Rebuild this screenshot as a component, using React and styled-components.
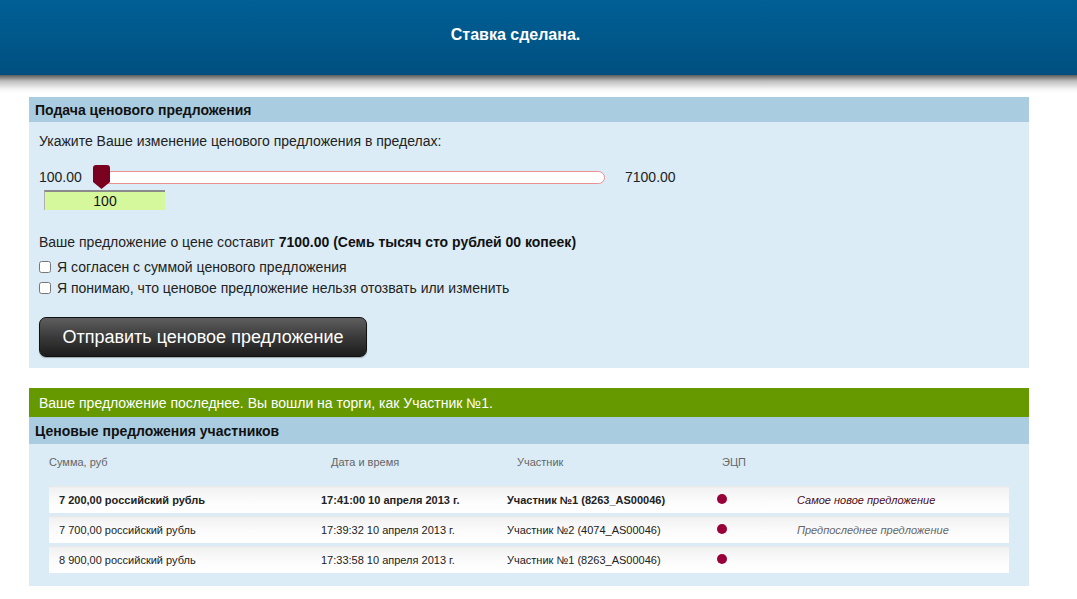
import React from 'react';
import styled, { createGlobalStyle } from 'styled-components';

const Global = createGlobalStyle`
  body {
    margin: 0;
    background: #fff;
    font-family: "Liberation Sans", Arial, sans-serif;
    color: #111;
  }
`;

const TopBar = styled.div`
  height: 75px;
  background: linear-gradient(#005f96, #00507f);
  display: flex;
  align-items: center;
  justify-content: center;
  color: #fff;
  font-weight: bold;
  font-size: 16px;
  padding: 0 46px 6px 0;
  box-sizing: border-box;
`;

const Shade = styled.div`
  height: 22px;
  background: linear-gradient(#5c5c5c 0px, #bdbdbd 6px, #f4f4f4 14px, #fff 18px);
`;

const Panel = styled.section`
  width: 1000px;
  margin-left: 29px;
  background: #dbecf6;
  margin-bottom: ${p => p.$gap || 0}px;
`;

const PanelTitle = styled.div`
  background: #a9cce0;
  padding-left: 6px;
  display: flex;
  align-items: center;
  font-weight: bold;
  font-size: 14px;
  color: #111;
  height: ${p => p.$h || 25}px;
`;

const Body = styled.div`
  padding: 11px 10px 11px 10px;
  font-size: 14px;
  color: #222;
`;

const Hint = styled.div`
  line-height: 16px;
  margin-bottom: 20px;
`;

const SliderRow = styled.div`
  display: flex;
  align-items: center;
  height: 16px;
`;

const Edge = styled.span`
  width: ${p => p.$w}px;
`;

const Track = styled.div`
  position: relative;
  width: 507px;
  height: 11px;
  background: #fff;
  border: 1px solid #ea9090;
  border-radius: 7px;
  margin-right: 20px;
`;

const Handle = styled.svg`
  position: absolute;
  left: -4px;
  top: -7px;
`;

const Amount = styled.div`
  margin: 5px 0 0 5px;
  width: 120px;
  height: 18px;
  background: #d6f89c;
  border-top: 2px solid #8b8b8b;
  border-left: 1px solid #b0b0b0;
  font-size: 14px;
  text-align: center;
  line-height: 18px;
  color: #111;
`;

const Total = styled.div`
  margin-top: 24px;
  line-height: 16px;
  b { color: #111; }
`;

const Check = styled.label`
  display: flex;
  align-items: center;
  gap: 6px;
  height: 21px;
  margin-top: ${p => p.$top || 0}px;
  input {
    margin: 0;
    width: 12px;
    height: 12px;
  }
`;

const SendButton = styled.button`
  margin-top: 19px;
  width: 328px;
  height: 40px;
  border: 1px solid #111;
  border-radius: 7px;
  background: linear-gradient(#5e5e5e, #3a3a3a 50%, #1c1c1c);
  color: #fff;
  font-family: "Liberation Sans", Arial, sans-serif;
  font-size: 18px;
  box-shadow: 0 1px 1px rgba(0,0,0,0.3);
`;

const Notice = styled.div`
  height: 29px;
  background: #669900;
  color: #fff;
  font-size: 14px;
  padding-left: 10px;
  display: flex;
  align-items: center;
`;

const TableBox = styled.div`
  padding: 0 20px 13px 20px;
`;

const HeadRow = styled.div`
  display: grid;
  grid-template-columns: 282px 186px 205px 1fr;
  height: 35px;
  align-items: center;
  font-size: 11px;
  color: #666;
`;

const Row = styled.div`
  display: grid;
  grid-template-columns: 262px 186px 210px 80px 1fr;
  align-items: center;
  height: 27px;
  padding-left: 10px;
  margin-top: 3px;
  background: linear-gradient(#e6e6e6, #f2f2f2 2px, #fcfcfc 60%, #fff);
  font-size: 11px;
  color: #222;
  font-weight: ${p => (p.$bold ? 'bold' : 'normal')};
  &:first-of-type { margin-top: 0; }
`;

const Dot = styled.span`
  width: 10px;
  height: 10px;
  border-radius: 50%;
  background: #99003a;
  margin-top: -1px;
`;

const Note = styled.span`
  font-style: italic;
  font-weight: normal;
  color: ${p => (p.$latest ? '#4a0a1a' : '#666')};
`;

const Rows = styled.div`
  margin-top: 7px;
`;

const bids = [
  { sum: '7 200,00 российский рубль', time: '17:41:00 10 апреля 2013 г.', who: 'Участник №1 (8263_AS00046)', note: 'Самое новое предложение', bold: true },
  { sum: '7 700,00 российский рубль', time: '17:39:32 10 апреля 2013 г.', who: 'Участник №2 (4074_AS00046)', note: 'Предпоследнее предложение' },
  { sum: '8 900,00 российский рубль', time: '17:33:58 10 апреля 2013 г.', who: 'Участник №1 (8263_AS00046)', note: '' },
];

export default function App() {
  return (
    <>
      <Global />
      <TopBar>Ставка сделана.</TopBar>
      <Shade />
      <Panel $gap={20}>
        <PanelTitle>Подача ценового предложения</PanelTitle>
        <Body>
          <Hint>Укажите Ваше изменение ценового предложения в пределах:</Hint>
          <SliderRow>
            <Edge $w={57}>100.00</Edge>
            <Track>
              <Handle width="17" height="24" viewBox="0 0 17 24">
                <path d="M3 0 H14 Q17 0 17 3 V17 L8.5 24 L0 17 V3 Q0 0 3 0 Z" fill="#7a0020" />
              </Handle>
            </Track>
            <span>7100.00</span>
          </SliderRow>
          <Amount>100</Amount>
          <Total>
            Ваше предложение о цене составит <b>7100.00 (Семь тысяч сто рублей 00 копеек)</b>
          </Total>
          <Check $top={6}><input type="checkbox" />Я согласен с суммой ценового предложения</Check>
          <Check><input type="checkbox" />Я понимаю, что ценовое предложение нельзя отозвать или изменить</Check>
          <SendButton>Отправить ценовое предложение</SendButton>
        </Body>
      </Panel>
      <Panel>
        <Notice>Ваше предложение последнее. Вы вошли на торги, как Участник №1.</Notice>
        <PanelTitle $h={27}>Ценовые предложения участников</PanelTitle>
        <TableBox>
          <HeadRow>
            <span>Сумма, руб</span>
            <span>Дата и время</span>
            <span>Участник</span>
            <span>ЭЦП</span>
          </HeadRow>
          <Rows>
            {bids.map((b, i) => (
              <Row key={i} $bold={b.bold}>
                <span>{b.sum}</span>
                <span>{b.time}</span>
                <span>{b.who}</span>
                <Dot />
                <Note $latest={i === 0}>{b.note}</Note>
              </Row>
            ))}
          </Rows>
        </TableBox>
      </Panel>
    </>
  );
}
